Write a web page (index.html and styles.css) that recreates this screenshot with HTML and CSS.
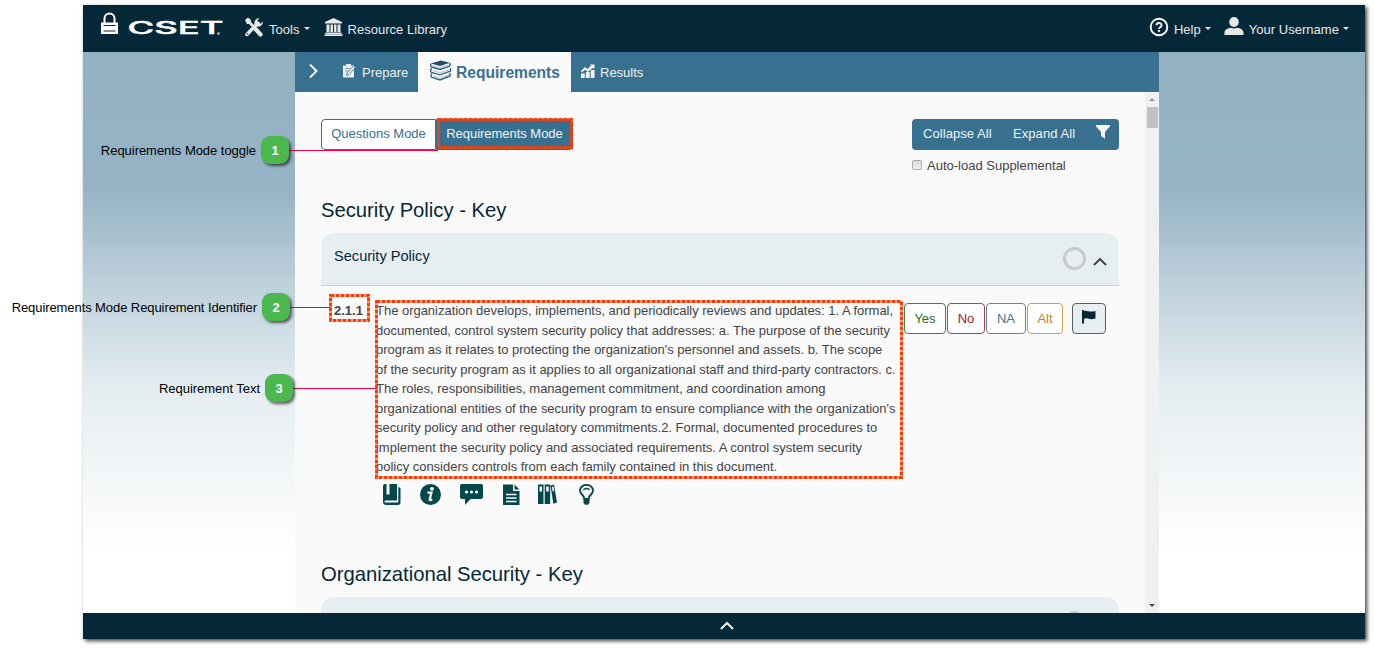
FILE: index.html
```html
<!DOCTYPE html>
<html lang="en">
<head>
<meta charset="utf-8">
<title>CSET - Requirements</title>
<link rel="stylesheet" href="styles.css">
</head>
<body>
<div class="app">
  <header class="topbar">
    <svg class="logo" width="124" height="32" viewBox="0 0 124 32">
      <path d="M4.500 11V6.500a5 5 0 0 1 10 0V11" fill="none" stroke="#fff" stroke-width="2"/>
      <path d="M1 10.500h17V22H1z" fill="#fff"/><path d="M3.500 13.500h12M3.500 19h12" stroke="#052838" stroke-width="1.200"/>
      <text class="logo-text" x="27.500" y="22" textLength="96" lengthAdjust="spacingAndGlyphs">CSET</text>
      <circle cx="118.500" cy="21.500" r="1.300" fill="#b9c5cb"/>
    </svg>
    <a class="nav tools"><svg width="20" height="20" viewBox="0 0 20 20"><path d="M3 17.500 14 6" stroke="#e8e8e8" stroke-width="3.500" stroke-linecap="round"/><path d="M19 4.500 16 7l-3-3 2.500-3A5 5 0 0 0 10.500 7l2.500 2.500A5 5 0 0 0 19 4.500z" fill="#e8e8e8"/><path d="m1 3 3-2.500L7 3v2l4 4-2 2-4-4H3z" fill="#e8e8e8"/><path d="m11.500 12 5 5.500" stroke="#e8e8e8" stroke-width="4.200" stroke-linecap="round"/><circle cx="3.500" cy="17" r=".8" fill="#052838"/></svg><span>Tools</span><i class="caret"></i></a>
    <a class="nav library"><svg width="19" height="18" viewBox="0 0 19 18" fill="#e8e8e8"><path d="M9.500 0 18 4v1.500H1V4zM2.500 6.500h3V14h-3zM6.500 6.500h2.500V14H6.500zM10 6.500h2.500V14H10zM13.500 6.500h3V14h-3zM1.500 14.500h16V16h-16zM.5 16.300h18V18H.5z"/></svg><span>Resource Library</span></a>
    <a class="nav help"><svg width="20" height="20" viewBox="0 0 20 20"><circle cx="10" cy="10" r="8.300" fill="none" stroke="#fff" stroke-width="1.900"/><path d="M7.500 8.200a2.500 2.300 0 1 1 3.600 2.100c-.8.400-1.100.8-1.100 1.700" fill="none" stroke="#e8e8e8" stroke-width="1.900"/><circle cx="10" cy="14" r="1.200" fill="#e8e8e8"/></svg><span>Help</span><i class="caret"></i></a>
    <a class="nav user"><svg width="20" height="18" viewBox="0 0 20 18" fill="#e8e8e8"><ellipse cx="10" cy="5" rx="4.800" ry="5"/><path d="M.5 18v-2.500c0-2.500 3-4.500 6.500-4.800 1.800 1 4.200 1 6 0 3.500.3 6.500 2.300 6.500 4.800V18z"/></svg><span>Your Username</span><i class="caret"></i></a>
  </header>
  <main class="stage">
    <section class="panel">
      <nav class="tabs">
        <span class="expand"><svg width="10" height="16" viewBox="0 0 10 16"><path d="m1 1.500 6.500 6.500L1 14.500" fill="none" stroke="#f4f4f4" stroke-width="2"/></svg></span>
        <span class="tab prepare"><svg width="14" height="14" viewBox="0 0 14 14"><path d="M1 1.500h11v12H1z" fill="#eee"/><path d="M4 0h5v3H4z" fill="#eee"/><path d="M3 4.500h5M3 7h3" stroke="#7fa3b7"/><path d="M4.500 11.500 5 9l6.500-7 2 1.500-6.500 7z" fill="#eee" stroke="#37718f" stroke-width=".8"/></svg>Prepare</span>
        <span class="tab active"><svg width="23" height="21" viewBox="0 0 23 21"><path d="m2 3.500 10-3 9 2.200-10 3.300z" fill="#1f4f6b"/><path d="M2.500 3.500c-1.500 1-1.200 3 .2 3.500L11 9.500l10-3.300" fill="none" stroke="#32627e" stroke-width="1.400"/><path d="M21 3v3M3 8.300c-2 1-2 3.300-.5 4L11 14.800l10.500-3.600M21.500 8v3.500M3 13.500c-1.500 1-1.500 3.200 0 3.800L11 20l10-4v-3" fill="none" stroke="#32627e" stroke-width="1.400"/><path d="m4 5.500 7 2.200 9-3M4 10.500l7 2.300 9-3M4 15.800l7 2.300 9-3.600" fill="none" stroke="#9ab6c5" stroke-width=".8"/></svg>Requirements</span>
        <span class="tab results"><svg width="14" height="14" viewBox="0 0 14 14" fill="#f2f2f2"><path d="M0 9.500h3.800V14H0zM4.800 8h3.900v6H4.800zM9.700 6h3.900v8H9.700z"/><path d="M0 7 4 3l2.500 2L10 1.500 9 .5h4.500V5l-1.200-1.200L6.500 8 4.200 5.500 1 8.500z"/></svg>Results</span>
      </nav>
      <div class="view">
        <div class="content">
          <div class="toolbar">
            <div class="modes"><button class="mode">Questions Mode</button><button class="mode selected">Requirements Mode</button></div>
            <div class="actions">
              <div class="group"><span class="collapse-all">Collapse All</span><span class="expand-all">Expand All</span><svg width="14" height="14" viewBox="0 0 14 14"><path d="M0 0h14v1.500L9 7v6.800L5 11V7L0 1.500z" fill="#f5f5f5"/></svg></div>
              <label class="auto"><i class="box"></i>Auto-load Supplemental</label>
            </div>
          </div>
          <h2>Security Policy - Key</h2>
          <div class="card"><span>Security Policy</span><i class="ring"></i><svg width="14" height="9" viewBox="0 0 14 9"><path d="m1 8 6-6 6 6" fill="none" stroke="#343c40" stroke-width="1.800"/></svg></div>
          <div class="question">
            <b class="number">2.1.1</b>
            <div class="body">
              <p>The organization develops, implements, and periodically reviews and updates: 1. A formal,<br>documented, control system security policy that addresses: a. The purpose of the security<br>program as it relates to protecting the organization's personnel and assets. b. The scope<br>of the security program as it applies to all organizational staff and third-party contractors. c.<br>The roles, responsibilities, management commitment, and coordination among<br>organizational entities of the security program to ensure compliance with the organization's<br>security policy and other regulatory commitments.2. Formal, documented procedures to<br>implement the security policy and associated requirements. A control system security<br>policy considers controls from each family contained in this document.</p>
              <div class="icons">
                <svg width="18" height="21" viewBox="0 0 18 21"><path d="M2 0h1.500v10.500h3V0H14v16.500H3.500C1 16.500.8 18.300 2.500 18.500H15.300V3l2.200 1v14.500c0 1.500-1 2.500-2.500 2.500H3.500C1 21 0 19.500 0 18V2C0 1 1 0 2 0z" fill="#04484b"/></svg>
                <svg class="i-info" width="21" height="21" viewBox="0 0 21 21"><circle cx="10.500" cy="10.500" r="10.500" fill="#04484b"/><circle cx="12" cy="4.800" r="1.900" fill="#fafafa"/><path d="M7.500 8.700h4l-1.800 6.500c-.3 1.500 1 1.200 2.300-.1" fill="none" stroke="#fafafa" stroke-width="2.200"/></svg>
                <svg class="i-chat" width="23" height="21" viewBox="0 0 23 21"><path d="M2 0h19a2 2 0 0 1 2 2v11a2 2 0 0 1-2 2H10.500L5 21v-6H2a2 2 0 0 1-2-2V2a2 2 0 0 1 2-2z" fill="#04484b"/><g fill="#fafafa"><circle cx="6.500" cy="8" r="1.600"/><circle cx="11.500" cy="8" r="1.600"/><circle cx="16.500" cy="8" r="1.600"/></g></svg>
                <svg class="i-doc" width="17" height="21" viewBox="0 0 17 21"><path d="M0 .5h10V7h6.500v14H0zM11.500.5l5 5h-5z" fill="#04484b"/><path d="M3 10.500h10.500M3 14h10.500M3 17.500h10.500" stroke="#fafafa" stroke-width="1.500"/></svg>
                <svg class="i-books" width="19" height="21" viewBox="0 0 19 21" fill="#04484b"><path d="M0 .5h5.500V20H0zM6.700.5h5.500V20H6.700zM12.500 1.500l3.500-1 3 18-3.700 1.200z"/><path d="M1.500 2.500H4v5H1.500zM8.200 2.500h2.500v5H8.200zM13.900 3l1.500-.4.800 4.500-1.500.4z" fill="#fafafa"/></svg>
                <svg class="i-bulb" width="15" height="21" viewBox="0 0 15 21"><path d="M5.500 15c0-4-4.500-4.500-4.500-8.500a6.500 5.600 0 0 1 13 0c0 4-4.500 4.500-4.500 8.500z" fill="none" stroke="#04484b" stroke-width="1.900"/><path d="M4.500 14h6v5L9 20.800H6L4.500 19z" fill="#04484b"/><path d="M4.500 6C5 4 10 4 10.500 6" fill="none" stroke="#04484b" stroke-width="1.400"/></svg>
              </div>
            </div>
            <div class="answers"><span class="yes">Yes</span><span class="no">No</span><span class="na">NA</span><span class="alt">Alt</span><span class="flag"><svg width="14" height="14" viewBox="0 0 14 14"><path d="M0 0h2v13.500H0zM2 1.200C5-.5 6 2.800 13.500 1v7.500C7 10.500 5.500 7 2 9z" fill="#052838"/></svg></span></div>
          </div>
          <h2>Organizational Security - Key</h2>
          <div class="card"><span></span><i class="ring"></i></div>
        </div>
        <div class="scroll"><i class="up"></i><i class="thumb"></i><i class="down"></i></div>
      </div>
    </section>
  </main>
  <footer class="bottombar"><svg width="14" height="9" viewBox="0 0 14 9"><path d="m1 8 6-6 6 6" fill="none" stroke="#f2f2f2" stroke-width="2"/></svg></footer>
</div>
<svg class="notes" width="1374" height="648" viewBox="0 0 1374 648">
  <g class="lead"><path d="M289 150.500H438M290 307.500H331M292 388.500H377"/></g>
  <g class="outline">
    <rect x="438.500" y="119.500" width="133" height="28"/>
    <rect x="330.500" y="295.500" width="38" height="25"/>
    <rect x="376.500" y="301.500" width="525" height="176"/>
  </g>
</svg>
<div class="callout c1"><span>Requirements Mode toggle</span><b>1</b></div>
<div class="callout c2"><span>Requirements Mode Requirement Identifier</span><b>2</b></div>
<div class="callout c3"><span>Requirement Text</span><b>3</b></div>
</body>
</html>
```
FILE: styles.css
```css
* { box-sizing: border-box; }
body { margin: 0; width: 1374px; height: 648px; overflow: hidden; position: relative; background: #fff; padding: 5px 9px 0 83px; font: 13px/19.5px "Liberation Sans", Arial, sans-serif; color: #444; }
svg { display: block; flex: none; }
.app { width: 1282px; height: 634px; display: flex; flex-direction: column; box-shadow: 2px 2px 4px rgba(0,0,0,.75); }
.topbar { height: 47px; flex: none; background: #052838; display: flex; align-items: flex-start; color: #e8e8e8; }
.logo { margin: 7px 0 0 17px; overflow: visible; }
.logo-text { font: 500 17.5px Inter, "Liberation Sans", sans-serif; fill: #fff; stroke: #fff; stroke-width: .4px; }
.nav { display: flex; align-items: flex-start; }
.nav span { margin-top: 15px; white-space: nowrap; letter-spacing: .03px; }
.nav svg { margin-top: 12px; }
.tools { margin-left: 20px; }
.tools span { margin-left: 5px; }
.library { margin-left: 14px; }
.library svg { margin-top: 13px; }
.library span { margin-left: 5px; }
.help { margin-left: auto; }
.help svg { margin-top: 12px; }
.help span { margin-left: 5px; }
.user { margin-left: 13px; margin-right: 16px; }
.user span { margin-left: 5px; }
.caret { margin: 22px 0 0 4px; border: 3.5px solid transparent; border-top-color: #e8e8e8; border-bottom: 0; }
.stage { flex: 1; min-height: 0; background: linear-gradient(#92b1c2 0, #96b4c5 140px, #bdd0db 230px, #e5edf1 340px, #fff 500px); }
.panel { width: 864px; height: 561px; margin-left: 212px; display: flex; flex-direction: column; background: #fafafa; }
.tabs { height: 40px; flex: none; background: #37718f; display: flex; }
.expand { padding: 11px 0 0 14px; width: 37px; }
.tab { display: flex; align-items: center; color: #f0f0f0; padding-top: 2px; }
.prepare { width: 86px; padding-left: 10px; gap: 6px; }
.prepare svg { margin-top: -4px; }
.active { width: 153px; padding-left: 11px; gap: 4px; color: #37718f; background: #fafafa; font-size: 15.6px; font-weight: bold; }
.active svg { margin-top: -6px; }
.results { padding-left: 10px; gap: 5px; }
.results svg { margin-top: -4px; }
.view { flex: 1; min-height: 0; display: flex; overflow: hidden; }
.content { width: 850px; padding: 27px 26px 0; overflow: hidden; }
.toolbar { height: 76px; display: flex; justify-content: space-between; }
.modes { display: flex; height: 31px; }
.mode { font: inherit; border: 1px solid #37718f; border-radius: 4px 0 0 4px; background: #fff; color: #37718f; padding: 0 0 1px; width: 115px; white-space: nowrap; }
.selected { width: 137px; background: #37718f; color: #f2f2f2; border-radius: 0 4px 4px 0; letter-spacing: -.03px; }
.actions { width: 207px; }
.group { height: 31px; background: #37718f; border-radius: 4px; color: #f2f2f2; display: flex; align-items: center; padding: 0 0 1px 11px; letter-spacing: .07px; }
.collapse-all { width: 90px; }
.expand-all { width: 83px; }
.group svg { margin-top: -4px; }
.auto { display: flex; align-items: center; margin-top: 6px; gap: 5px; }
.box { width: 10px; height: 10px; margin-top: -2px; border: 1px solid #aaa; border-radius: 2px; background: linear-gradient(#ddd, #efefef); }
h2 { font-size: 20.3px; line-height: 30px; height: 38px; margin: 0; font-weight: normal; color: #052838; letter-spacing: -.03px; }
.card { height: 53px; background: #e7eef2; border-radius: 13px 13px 0 0; border-bottom: 1px solid #c8ced1; display: flex; padding: 14px 12px 0 13px; font-size: 14.6px; color: #052838; }
.card span { flex: 1; }
.card .ring { width: 23px; height: 23px; border: 3px solid #c8cacb; border-radius: 50%; margin: 0 1px 0 0; }
.card svg { margin: 10px 0 0 6px; }
.content > .card:last-child { padding-right: 32px; }
.question { display: flex; height: 273px; padding-top: 15px; }
.number { width: 55px; padding-left: 13px; }
.body { width: 528px; }
.body p { margin: 0; white-space: nowrap; letter-spacing: -.02px; }
.icons { display: flex; padding: 8px 0 0 7px; margin-top: -1px; }
.i-info { margin-left: 19px; }
.i-chat { margin-left: 19px; }
.i-doc { margin-left: 20px; }
.i-books { margin-left: 18px; }
.i-bulb { margin-left: 22px; }
.answers { display: flex; gap: 1px; margin-top: 2px; }
.answers span { height: 31px; border: 1px solid; border-radius: 4px; background: #fff; display: flex; justify-content: center; align-items: center; }
.answers .yes { width: 42px; color: #247329; border-color: #3b8442; }
.answers .no { width: 38px; color: #a71925; border-color: #b63d44; }
.answers .na { width: 40px; color: #437697; border-color: #568ba5; }
.answers .alt { width: 36px; color: #bd841c; border-color: #cfa04a; }
.answers .flag { width: 34px; margin-left: 8px; border-color: #555e64; background: #e7eef2; padding-bottom: 4px; }
.scroll { width: 14px; background: #f0f0f0; display: flex; flex-direction: column; align-items: center; }
.up { border: 3px solid transparent; border-bottom-color: #999; border-top: 0; margin-top: 6px; }
.thumb { width: 11px; height: 21px; background: #c1c1c1; margin-top: 6px; }
.down { border: 3px solid transparent; border-top-color: #444; border-bottom: 0; margin: auto 0 6px; }
.bottombar { height: 26px; flex: none; background: #052838; display: flex; padding: 8px 0 0 637px; }
.notes { position: absolute; left: 0; top: 0; }
.lead { stroke: #f50046; stroke-width: 1; fill: none; }
.outline { fill: none; stroke: #ff3b05; stroke-width: 3; stroke-dasharray: 4 1; }
.callout { position: absolute; display: flex; align-items: center; justify-content: flex-end; gap: 5px; color: #000; white-space: nowrap; letter-spacing: -.04px; }
.callout span { padding-top: 2px; }
.callout b { width: 28px; height: 28px; background: #4ab74f; border-radius: 9px; color: #fff; display: flex; align-items: center; justify-content: center; padding-top: 1px; box-shadow: 2px 2px 3px rgba(0,0,0,.6); }
.c1 { right: 1085px; top: 136px; }
.c2 { right: 1084px; top: 293px; letter-spacing: -.08px; }
.c3 { right: 1081px; top: 374px; }
```
